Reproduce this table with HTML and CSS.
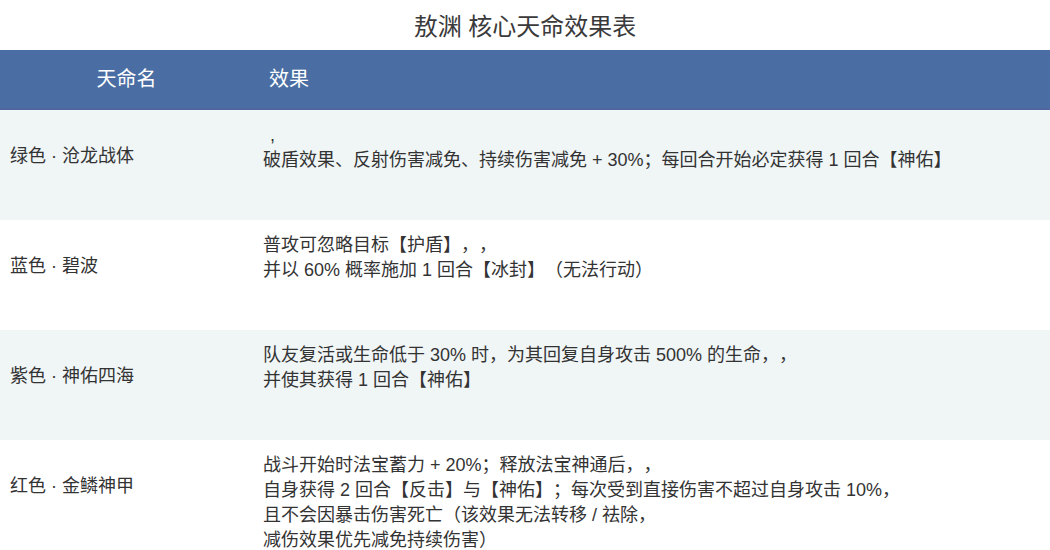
FILE: index.html
```html
<!DOCTYPE html>
<html lang="zh">
<head>
<meta charset="utf-8">
<title>敖渊 核心天命效果表</title>
<link rel="stylesheet" href="styles.css">
</head>
<body>
<div class="page">
  <h1 class="title">敖渊 核心天命效果表</h1>
  <div class="table">
    <div class="head name">天命名</div>
    <div class="head effect">效果</div>

    <div class="cell name alt">绿色 · 沧龙战体</div>
    <div class="cell effect alt"><span class="lead">,</span><br>破盾效果、反射伤害减免、持续伤害减免 + 30%；每回合开始必定获得 1 回合【神佑】</div>

    <div class="cell name">蓝色 · 碧波</div>
    <div class="cell effect">普攻可忽略目标【护盾】，，<br>并以 60% 概率施加 1 回合【冰封】（无法行动）</div>

    <div class="cell name alt">紫色 · 神佑四海</div>
    <div class="cell effect alt">队友复活或生命低于 30% 时，为其回复自身攻击 500% 的生命，，<br>并使其获得 1 回合【神佑】</div>

    <div class="cell name">红色 · 金鳞神甲</div>
    <div class="cell effect">战斗开始时法宝蓄力 + 20%；释放法宝神通后，，<br>自身获得 2 回合【反击】与【神佑】；每次受到直接伤害不超过自身攻击 10%，<br>且不会因暴击伤害死亡（该效果无法转移 / 祛除，<br>减伤效果优先减免持续伤害）</div>
  </div>
</div>
</body>
</html>
```
FILE: styles.css
```css
html, body {
  margin: 0;
  padding: 0;
  background: #ffffff;
}

body {
  font-family: "Liberation Sans", "Noto Sans CJK SC", sans-serif;
  color: #333333;
  width: 1050px;
  overflow: hidden;
  text-spacing-trim: space-all;
}

.page {
  display: flex;
  flex-direction: column;
}

.title {
  margin: 0;
  height: 50px;
  display: flex;
  align-items: center;
  justify-content: center;
  font-size: 24px;
  font-weight: normal;
  color: #3a3a3a;
  padding-bottom: 2px;
  box-sizing: border-box;
}

.table {
  display: grid;
  grid-template-columns: 253px 1fr;
  grid-template-rows: 60px 110px 110px 110px 130px;
}

.head {
  background: #4a6ea3;
  color: #ffffff;
  font-size: 20px;
  display: flex;
  align-items: center;
  padding-bottom: 3px;
  box-sizing: border-box;
  border-bottom: 2px solid #4f66a0;
}

.head.name {
  justify-content: center;
}

.head.effect {
  padding-left: 16px;
}

.cell {
  font-size: 18px;
  line-height: 25px;
  box-sizing: border-box;
}

.cell.name {
  padding: 34px 0 0 10px;
}

.cell.effect {
  padding: 13px 0 0 10px;
}

.alt {
  background: #f0f5f6;
}

.lead {
  display: inline-block;
  padding-left: 7px;
}
```
